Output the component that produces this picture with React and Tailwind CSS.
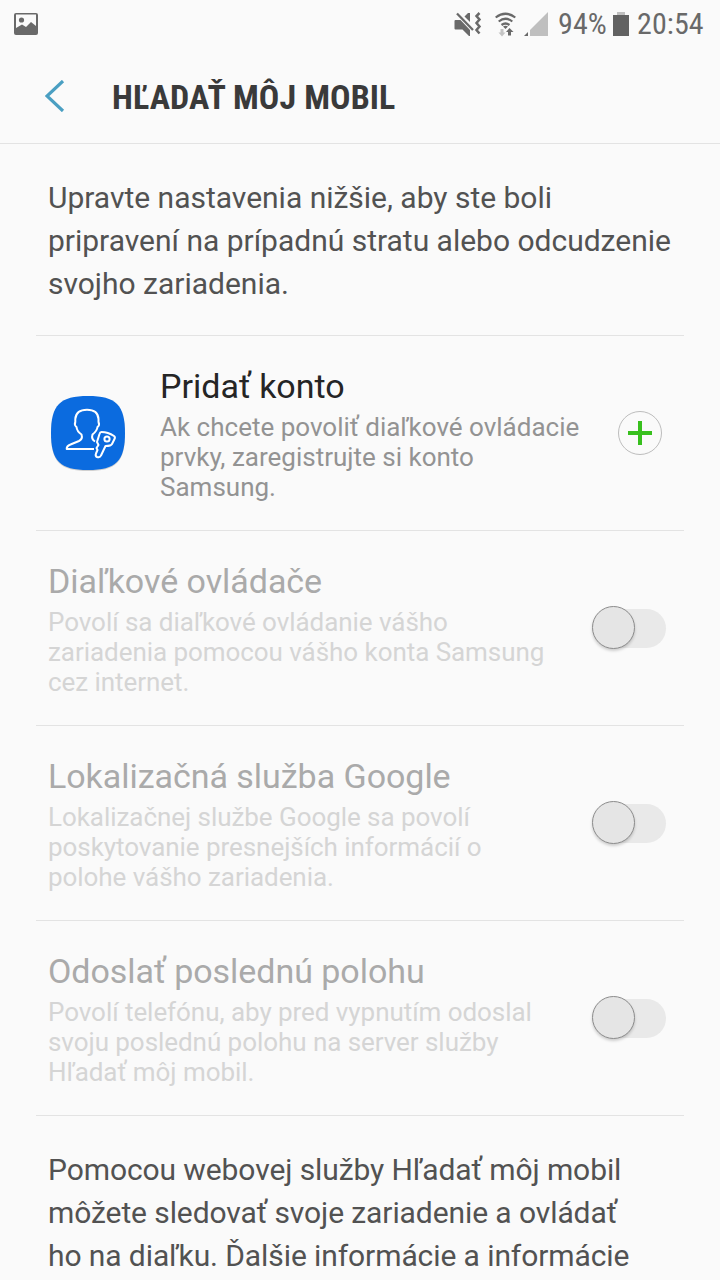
import React from "react";

const rows = [
  {
    title: "Diaľkové ovládače",
    lines: ["Povolí sa diaľkové ovládanie vášho", "zariadenia pomocou vášho konta Samsung", "cez internet."],
  },
  {
    title: "Lokalizačná služba Google",
    lines: ["Lokalizačnej službe Google sa povolí", "poskytovanie presnejších informácií o", "polohe vášho zariadenia."],
  },
  {
    title: "Odoslať poslednú polohu",
    lines: ["Povolí telefónu, aby pred vypnutím odoslal", "svoju poslednú polohu na server služby", "Hľadať môj mobil."],
  },
];

function Lines({ lines }) {
  return lines.map((line) => (
    <span key={line} className="block whitespace-nowrap">{line}</span>
  ));
}

function StatusBar() {
  return (
    <div className="flex h-12 items-center text-[#696969]">
      <svg className="ml-[14px] h-6 w-6 shrink-0" viewBox="0 0 24 24" fill="#696969">
        <path fillRule="evenodd" d="M2 1H22Q24 1 24 3V21Q24 23 22 23H2Q0 23 0 21V3Q0 1 2 1ZM2 2.5V16L8 12.500L12 15L17 10L22 14V2.5Z" />
        <circle cx="7.5" cy="8" r="2.6" />
      </svg>
      <svg className="ml-[416px] h-7 w-7 shrink-0" viewBox="0 0 28 28" fill="#696969">
        <path d="M1.500 10H6.500L16 20V26H15L8.500 19.500H1.500Q0.500 19.500 0.500 18.500V11Q0.500 10 1.500 10Z" />
        <path d="M10.500 6.500L14 3H16V12Z" />
        <path d="M3 3.500L19 20" stroke="#696969" strokeWidth="2.300" />
        <path d="M25.500 3L22.500 6L25.500 9.500L22.500 13L25.500 16.500L22.500 20L25.500 23.500" fill="none" stroke="#696969" strokeWidth="2.500" />
      </svg>
      <svg className="ml-[13px] h-7 w-[22px] shrink-0" viewBox="0 0 22 28" fill="none" stroke="#696969" strokeWidth="2.200">
        <path d="M0.700 7.500Q10.500 0 20.300 7.500M3.700 11.500Q10.500 6 17.300 11.500M6.500 15Q10.500 12 14.500 15" />
        <path d="M8 16.500Q10.500 15 13 16.500L10.500 19Z" fill="#696969" stroke="none" />
        <path d="M5.500 19H8.500V22.500H10.500L7 26.500L3.500 22.500H5.500Z" fill="#c4c4c4" stroke="none" />
        <path d="M13 25.500V22H11L14.500 18L18.500 22H16V25.500Z" fill="#696969" stroke="none" />
      </svg>
      <svg className="ml-[7px] h-6 w-6 shrink-0" viewBox="0 0 24 24">
        <path d="M0 24L4 20V24Z" fill="#696969" />
        <path d="M6 18L24 0V24H6Z" fill="#bfbfbf" />
      </svg>
      <div className="ml-[10px] w-[50px] shrink-0">
        <span className="block whitespace-nowrap text-[30px] leading-[48px] tracking-[0.1px] [font-stretch:75%]">94%</span>
      </div>
      <svg className="ml-[5px] h-6 w-4 shrink-0" viewBox="0 0 16 24">
        <path d="M4 0H12V3H16V5H0V3H4Z" fill="#bfbfbf" />
        <path d="M0 3H16V24H0Z" fill="#626262" />
      </svg>
      <div className="ml-2 w-[70px] shrink-0">
        <span className="block whitespace-nowrap text-[30px] leading-[48px] tracking-[0.1px] [font-stretch:75%]">20:54</span>
      </div>
    </div>
  );
}

function AccountIcon() {
  return (
    <svg className="ml-3 h-[80px] w-[80px] shrink-0" viewBox="0 0 80 80" fill="none">
      <path d="M40 4C68 4 77 13 77 41S68 78 40 78S3 69 3 41S12 4 40 4Z" fill="#d0d0d0" />
      <path d="M40 3C68 3 77 12 77 40S68 77 40 77S3 68 3 40S12 3 40 3Z" fill="#0b6bdf" />
      <g stroke="#fff" strokeWidth="2" strokeLinejoin="round">
        <path d="M46 56H18.700Q18.500 53 22.500 51.500L31 48Q35 46 33.500 41.500Q29 38.500 28.500 34Q26 32 27.300 29V26Q28 16.700 39 16.700T50.500 26V29Q52 32 49.500 34Q49 38 44.500 41.500Q43 46 47 48.500" />
        <path d="M53.500 39Q60 39 66 43Q67.500 44 66.500 46L64 51Q63 53 57.500 53L53 62.500Q52 65 49 64Q47 63 48 60.500L49.500 57L48.500 55L50.500 52L49 49L51.500 41Q52 39 53.500 39Z" />
        <circle cx="59" cy="46" r="2.600" />
      </g>
    </svg>
  );
}

function Toggle() {
  return (
    <div className="relative ml-auto mr-[18px] h-11 w-[74px] shrink-0">
      <div className="absolute inset-x-0 left-2 top-[3px] h-[39px] rounded-full bg-[#e9e9e9]" />
      <div className="absolute left-0 top-0 size-[43px] rounded-full border border-[#8c8c8c] bg-[#e5e5e5] shadow-[0_2px_3px_rgba(0,0,0,0.18)]" />
    </div>
  );
}

export default function App() {
  return (
    <div className="h-[1280px] w-[720px] overflow-hidden bg-[#fafafa] font-['Roboto',sans-serif]">
      <StatusBar />
      <header className="flex h-24 items-center border-b border-[#e3e3e3]">
        <svg className="ml-[45px] h-8 w-[20px] shrink-0" viewBox="0 0 20 32" fill="none">
          <path d="M18 1L2 16L18 31" stroke="#4a9fc2" strokeWidth="3.200" />
        </svg>
        <h1 className="ml-[47px] whitespace-nowrap pt-1 text-[34px] font-bold tracking-[0.1px] text-[#3a3a3a] [font-stretch:75%]">HĽADAŤ MÔJ MOBIL</h1>
      </header>
      <p className="h-[191px] pl-12 pt-8 text-[30px] leading-[43px] tracking-[-0.01px] text-[#525252]">
        <Lines lines={["Upravte nastavenia nižšie, aby ste boli", "pripravení na prípadnú stratu alebo odcudzenie", "svojho zariadenia."]} />
      </p>
      <main className="mx-9">
        <section className="flex h-[195px] items-center border-t border-[#e3e3e3]">
          <AccountIcon />
          <div className="ml-8">
            <h2 className="mb-1 text-[34px] leading-[44px] text-[#252525]">Pridať konto</h2>
            <p className="text-[26px] leading-[30px] text-[#939393]">
              <Lines lines={["Ak chcete povoliť diaľkové ovládacie", "prvky, zaregistrujte si konto", "Samsung."]} />
            </p>
          </div>
          <div className="ml-auto mr-[22px] flex size-11 shrink-0 items-center justify-center rounded-full border border-[#bdbdbd]">
            <svg className="size-6" viewBox="0 0 24 24"><path d="M12 0V24M0 12H24" stroke="#38c01e" strokeWidth="4" /></svg>
          </div>
        </section>
        {rows.map((row) => (
          <section key={row.title} className="flex h-[195px] items-center border-t border-[#e3e3e3] pl-3">
            <div>
              <h2 className="mb-1 whitespace-nowrap text-[34px] leading-[44px] tracking-[-0.04px] text-[#aaaaaa]">{row.title}</h2>
              <p className="text-[26px] leading-[30px] tracking-[-0.055px] text-[#d5d5d5]"><Lines lines={row.lines} /></p>
            </div>
            <Toggle />
          </section>
        ))}
      </main>
      <div className="mx-9 border-t border-[#e3e3e3] pl-3 pt-8 text-[30px] leading-[43px] tracking-[-0.09px] text-[#525252]">
        <Lines lines={["Pomocou webovej služby Hľadať môj mobil", "môžete sledovať svoje zariadenie a ovládať", "ho na diaľku. Ďalšie informácie a informácie"]} />
      </div>
    </div>
  );
}
